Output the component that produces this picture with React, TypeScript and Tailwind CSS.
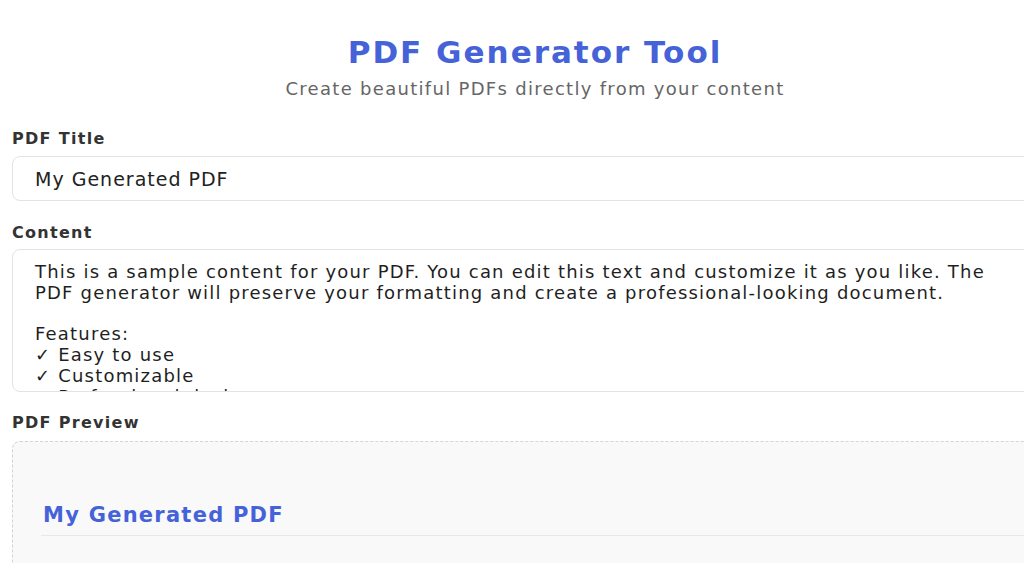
import React from "react";

const content = `This is a sample content for your PDF. You can edit this text and customize it as you like. The
PDF generator will preserve your formatting and create a professional-looking document.

Features:
✓ Easy to use
✓ Customizable
✓ Professional design
✓ Instant download`;

const font = { fontFamily: '"DejaVu Sans", "Noto Sans", sans-serif' };

export default function App() {
  return (
    <div className="w-[1024px] h-[576px] overflow-hidden bg-white" style={font}>
      <div className="h-[563px] overflow-hidden">
        <div className="ml-[12px] w-[1046px]">
          <header className="pt-[30px] text-center">
            <h1 className="text-[31px] leading-[44px] font-bold tracking-[2px] text-[#4562d8]">PDF Generator Tool</h1>
            <p className="mt-[3px] text-[18px] leading-[24px] tracking-[1.3px] text-[#666666]">
              Create beautiful PDFs directly from your content
            </p>
          </header>

          <div className="mt-[26px]">
            <label className="block text-[16px] leading-[24px] font-bold tracking-[1.3px] text-[#333333]">PDF Title</label>
            <input
              className="mt-[5px] block w-full h-[45px] rounded-[8px] border border-[#e3e3e3] bg-white px-[22px] text-[19px] tracking-[1px] text-[#222222] outline-none"
              defaultValue="My Generated PDF"
              style={font}
            />
          </div>

          <div className="mt-[20px]">
            <label className="block text-[16px] leading-[24px] font-bold tracking-[1.3px] text-[#333333]">Content</label>
            <textarea
              wrap="off"
              readOnly
              className="mt-[4px] block w-full h-[143px] resize-none overflow-hidden rounded-[8px] border border-[#e3e3e3] bg-white px-[22px] pt-[12px] text-[18px] leading-[20.8px] tracking-[1.2px] text-[#1f1f1f] outline-none"
              value={content}
              style={font}
            />
          </div>

          <div className="mt-[19px]">
            <label className="block text-[16px] leading-[24px] font-bold tracking-[1.3px] text-[#333333]">PDF Preview</label>
            <div className="mt-[6px] h-[300px] rounded-[8px] border border-dashed border-[#d4d4d4] bg-[#f9f9f9] px-[28px] pt-[59px]">
              <h2 className="border-b border-[#e8e8e8] pb-[6px] pl-[2px] text-[21px] leading-[28px] font-bold tracking-[1.25px] text-[#4562d8]">
                My Generated PDF
              </h2>
            </div>
          </div>
        </div>
      </div>
    </div>
  );
}
